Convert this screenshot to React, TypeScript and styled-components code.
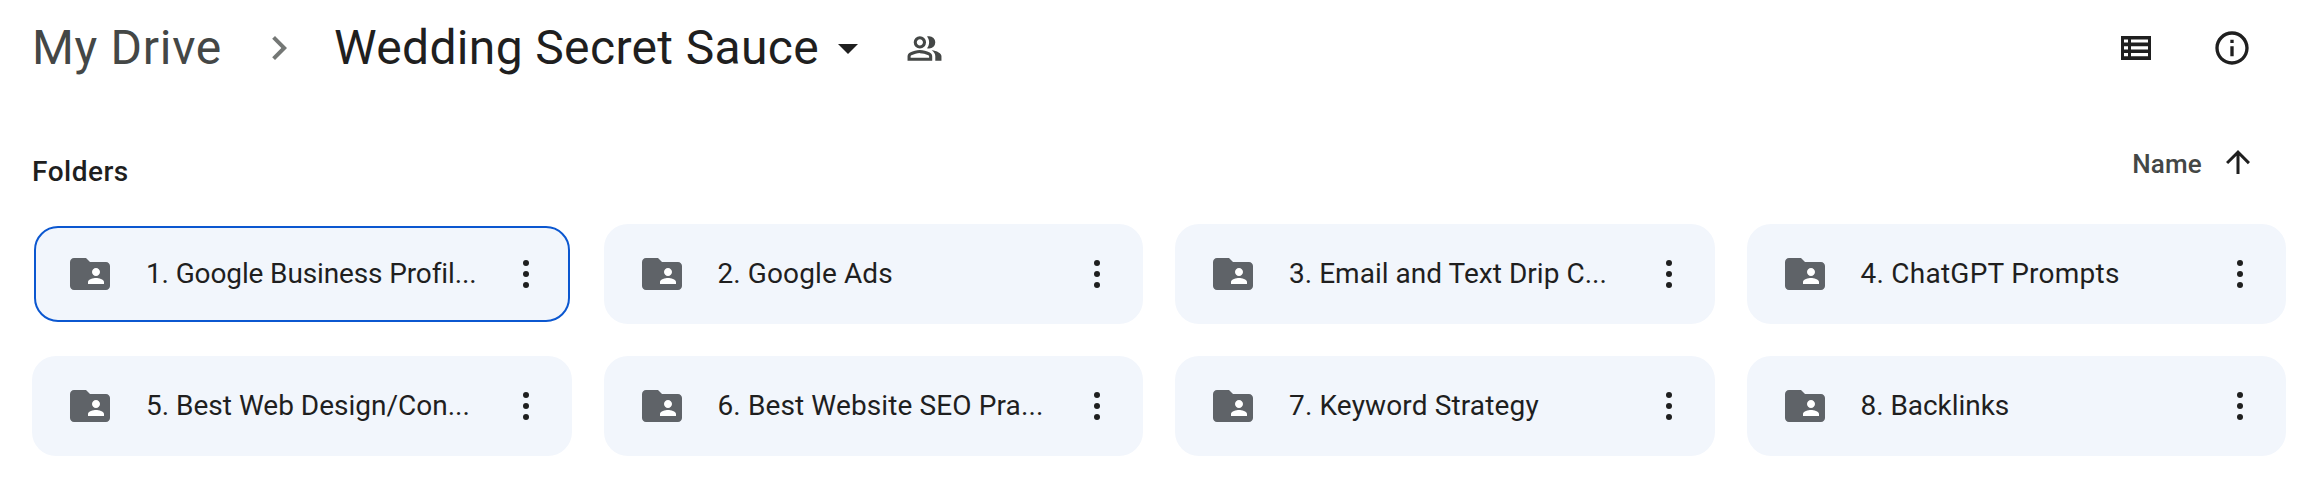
import React from 'react';
import styled, { createGlobalStyle } from 'styled-components';

const GlobalStyle = createGlobalStyle`
  * { box-sizing: border-box; }
  body { margin: 0; background: #fff; color: #1f1f1f; font-family: Roboto, "Liberation Sans", sans-serif; }
  button { font: inherit; color: inherit; background: none; border: 0; padding: 0; }
  svg { display: block; flex: none; fill: currentColor; }
`;

const Page = styled.main`
  width: 2298px;
  height: 496px;
  padding-left: 32px;
  overflow: hidden;
`;

const TopBar = styled.header`
  display: flex;
  align-items: center;
  justify-content: space-between;
  height: 96px;
  padding-right: 46px;
`;

const Breadcrumbs = styled.nav`
  display: flex;
  align-items: center;
`;

const Crumb = styled.button<{ $current?: boolean; $tracking: number }>`
  font-size: 48px;
  line-height: 56px;
  white-space: nowrap;
  letter-spacing: ${p => p.$tracking}px;
  color: ${p => (p.$current ? '#1f1f1f' : '#444746')};
`;

const CrumbSeparator = styled.span`
  margin: 0 43px 0 45px;
  color: #747775;
`;

const CrumbCaret = styled.span`
  margin-left: 5px;
`;

const ShareStatus = styled.span`
  margin-left: 34px;
  color: #444746;
`;

const Actions = styled.div`
  display: flex;
  align-items: center;
  gap: 61px;
`;

const SectionHeader = styled.div`
  display: flex;
  justify-content: space-between;
  height: 128px;
  padding-right: 42px;
`;

const SectionTitle = styled.h2`
  margin: 60px 0 0;
  font-size: 28px;
  line-height: 32px;
  font-weight: 500;
  letter-spacing: 0.5px;
`;

const SortControl = styled.button`
  display: flex;
  align-items: center;
  gap: 18px;
  height: 36px;
  margin-top: 48px;
`;

const SortLabel = styled.span`
  padding-top: 3px;
  font-size: 26px;
  line-height: 36px;
  font-weight: 500;
  letter-spacing: 0.2px;
  color: #444746;
`;

const FolderGrid = styled.section`
  display: grid;
  grid-template-columns: repeat(4, 539.5px);
  grid-auto-rows: 100px;
  gap: 32px;
`;

const FolderCard = styled.article<{ $focused?: boolean }>`
  display: flex;
  align-items: center;
  margin: ${p => (p.$focused ? '2px' : '0')};
  padding: ${p => (p.$focused ? '0 39px 0 30px' : '0 43px 0 34px')};
  border: ${p => (p.$focused ? '2px solid #0b57d0' : '0')};
  border-radius: 24px;
  background: #f2f6fc;
  color: #5f6368;
`;

const FolderName = styled.span<{ $tracking: number }>`
  flex: 1;
  padding-left: 32px;
  font-size: 28px;
  line-height: 36px;
  white-space: nowrap;
  letter-spacing: ${p => p.$tracking}px;
  color: #1f1f1f;
`;

const MenuButton = styled.button`
  color: #1f1f1f;
`;

const ChevronIcon = () => (
  <svg width="24" height="48" viewBox="6 0 12 24"><path d="M10 6 8.59 7.41 13.17 12l-4.58 4.59L10 18l6-6z" /></svg>
);
const CaretIcon = () => (
  <svg width="48" height="48" viewBox="0 0 24 24"><path d="m7 10 5 5 5-5z" /></svg>
);
const PeopleIcon = () => (
  <svg width="37" height="37" viewBox="0 0 24 24"><path d="M1 20v-2.8q0-.85.438-1.563T2.6 14.55q1.55-.775 3.15-1.163T9 13t3.25.388 3.15 1.162q.725.375 1.163 1.088T17 17.2V20zm18 0v-3q0-1.1-.612-2.113T16.65 13.15q1.275.15 2.4.513t2.1.887q.9.5 1.375 1.112T23 17v3zM9 12q-1.65 0-2.825-1.175T5 8t1.175-2.825T9 4t2.825 1.175T13 8t-1.175 2.825T9 12m10-4q0 1.65-1.175 2.825T15 12q-.275 0-.7-.062t-.7-.138q.675-.8 1.038-1.775T15 8t-.362-2.025T13.6 4.2q.35-.125.7-.163T15 4q1.65 0 2.825 1.175T19 8M3 18h12v-.8q0-.275-.137-.5t-.363-.35q-1.35-.675-2.725-1.012T9 15t-2.775.338T3.5 16.35q-.225.125-.363.35T3 17.2zm6-8q.825 0 1.413-.587T11 8t-.587-1.412T9 6t-1.412.588T7 8t.588 1.413T9 10" /></svg>
);
const ListIcon = () => (
  <svg width="30" height="24" viewBox="0 0 30 24"><path fillRule="evenodd" d="M0 0h30v24H0zM3 3.5v3h4v-3zM10 3.5v3h17v-3zM3 10.2v3.2h4v-3.2zM10 10.2v3.2h17v-3.2zM3 17v3.2h4V17zM10 17v3.2h17V17z" /></svg>
);
const InfoIcon = () => (
  <svg width="40" height="40" viewBox="0 0 24 24"><path d="M11 7h2v2h-2zm0 4h2v6h-2zm1-9C6.48 2 2 6.48 2 12s4.48 10 10 10 10-4.48 10-10S17.52 2 12 2m0 18c-4.41 0-8-3.59-8-8s3.59-8 8-8 8 3.59 8 8-3.59 8-8 8" /></svg>
);
const ArrowUpIcon = () => (
  <svg width="36" height="36" viewBox="0 0 24 24"><path d="m4 12 1.41 1.41L11 7.83V20h2V7.83l5.58 5.59L20 12l-8-8z" /></svg>
);
const SharedFolderIcon = () => (
  <svg width="48" height="48" viewBox="0 0 24 24">
    <path d="M20 6h-8l-2-2H4c-1.1 0-1.99.9-1.99 2L2 18c0 1.1.9 2 2 2h16c1.1 0 2-.9 2-2V8c0-1.1-.9-2-2-2" />
    <path fill="#fff" d="M15 9c1.1 0 2 .9 2 2s-.9 2-2 2-2-.9-2-2 .9-2 2-2m4 8h-8v-1c0-1.33 2.67-2 4-2s4 .67 4 2z" />
  </svg>
);
const MoreIcon = () => (
  <svg width="6" height="30" viewBox="0 0 6 30"><circle cx="3" cy="4" r="3" /><circle cx="3" cy="15" r="3" /><circle cx="3" cy="26" r="3" /></svg>
);

const folders = [
  { name: '1. Google Business Profil...', tracking: -0.13 },
  { name: '2. Google Ads', tracking: 0.1 },
  { name: '3. Email and Text Drip C...', tracking: 0.03 },
  { name: '4. ChatGPT Prompts', tracking: 0.25 },
  { name: '5. Best Web Design/Con...', tracking: 0 },
  { name: '6. Best Website SEO Pra...', tracking: 0.12 },
  { name: '7. Keyword Strategy', tracking: 0.14 },
  { name: '8. Backlinks', tracking: -0.05 },
];

export default function App() {
  return (
    <Page>
      <GlobalStyle />
      <TopBar>
        <Breadcrumbs>
          <Crumb $tracking={0.7}>My Drive</Crumb>
          <CrumbSeparator><ChevronIcon /></CrumbSeparator>
          <Crumb $current $tracking={0.35}>Wedding Secret Sauce</Crumb>
          <CrumbCaret><CaretIcon /></CrumbCaret>
          <ShareStatus><PeopleIcon /></ShareStatus>
        </Breadcrumbs>
        <Actions>
          <button aria-label="List view"><ListIcon /></button>
          <button aria-label="View details"><InfoIcon /></button>
        </Actions>
      </TopBar>
      <SectionHeader>
        <SectionTitle>Folders</SectionTitle>
        <SortControl>
          <SortLabel>Name</SortLabel>
          <ArrowUpIcon />
        </SortControl>
      </SectionHeader>
      <FolderGrid>
        {folders.map((folder, i) => (
          <FolderCard key={folder.name} $focused={i === 0}>
            <SharedFolderIcon />
            <FolderName $tracking={folder.tracking}>{folder.name}</FolderName>
            <MenuButton aria-label="More actions"><MoreIcon /></MenuButton>
          </FolderCard>
        ))}
      </FolderGrid>
    </Page>
  );
}
